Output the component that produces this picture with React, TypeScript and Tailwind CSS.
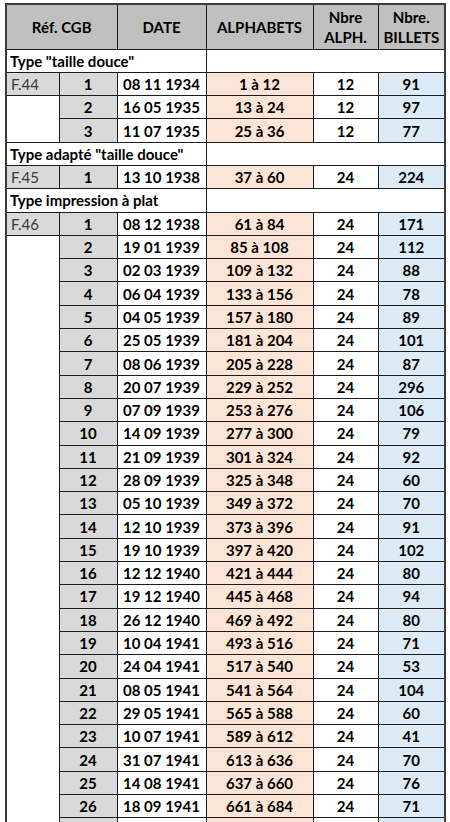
type Row = { n: number | null; date: string; alpha: string; count: number | null; billets: number | null };

type Group = { title: string; ref: string; rows: Row[] };

const GROUPS: Group[] = [
  {
    title: 'Type "taille douce"',
    ref: "F.44",
    rows: [
      { n: 1, date: "08 11 1934", alpha: "1 à 12", count: 12, billets: 91 },
      { n: 2, date: "16 05 1935", alpha: "13 à 24", count: 12, billets: 97 },
      { n: 3, date: "11 07 1935", alpha: "25 à 36", count: 12, billets: 77 },
    ],
  },
  {
    title: 'Type adapté "taille douce"',
    ref: "F.45",
    rows: [{ n: 1, date: "13 10 1938", alpha: "37 à 60", count: 24, billets: 224 }],
  },
  {
    title: "Type impression à plat",
    ref: "F.46",
    rows: [
      { n: 1, date: "08 12 1938", alpha: "61 à 84", count: 24, billets: 171 },
      { n: 2, date: "19 01 1939", alpha: "85 à 108", count: 24, billets: 112 },
      { n: 3, date: "02 03 1939", alpha: "109 à 132", count: 24, billets: 88 },
      { n: 4, date: "06 04 1939", alpha: "133 à 156", count: 24, billets: 78 },
      { n: 5, date: "04 05 1939", alpha: "157 à 180", count: 24, billets: 89 },
      { n: 6, date: "25 05 1939", alpha: "181 à 204", count: 24, billets: 101 },
      { n: 7, date: "08 06 1939", alpha: "205 à 228", count: 24, billets: 87 },
      { n: 8, date: "20 07 1939", alpha: "229 à 252", count: 24, billets: 296 },
      { n: 9, date: "07 09 1939", alpha: "253 à 276", count: 24, billets: 106 },
      { n: 10, date: "14 09 1939", alpha: "277 à 300", count: 24, billets: 79 },
      { n: 11, date: "21 09 1939", alpha: "301 à 324", count: 24, billets: 92 },
      { n: 12, date: "28 09 1939", alpha: "325 à 348", count: 24, billets: 60 },
      { n: 13, date: "05 10 1939", alpha: "349 à 372", count: 24, billets: 70 },
      { n: 14, date: "12 10 1939", alpha: "373 à 396", count: 24, billets: 91 },
      { n: 15, date: "19 10 1939", alpha: "397 à 420", count: 24, billets: 102 },
      { n: 16, date: "12 12 1940", alpha: "421 à 444", count: 24, billets: 80 },
      { n: 17, date: "19 12 1940", alpha: "445 à 468", count: 24, billets: 94 },
      { n: 18, date: "26 12 1940", alpha: "469 à 492", count: 24, billets: 80 },
      { n: 19, date: "10 04 1941", alpha: "493 à 516", count: 24, billets: 71 },
      { n: 20, date: "24 04 1941", alpha: "517 à 540", count: 24, billets: 53 },
      { n: 21, date: "08 05 1941", alpha: "541 à 564", count: 24, billets: 104 },
      { n: 22, date: "29 05 1941", alpha: "565 à 588", count: 24, billets: 60 },
      { n: 23, date: "10 07 1941", alpha: "589 à 612", count: 24, billets: 41 },
      { n: 24, date: "31 07 1941", alpha: "613 à 636", count: 24, billets: 70 },
      { n: 25, date: "14 08 1941", alpha: "637 à 660", count: 24, billets: 76 },
      { n: 26, date: "18 09 1941", alpha: "661 à 684", count: 24, billets: 71 },
      // next row only peeks in at the bottom edge
      { n: null, date: "", alpha: "", count: null, billets: null },
    ],
  },
];

const cell = "border border-[#1c1c1c] h-[23.3px] p-0 text-center font-bold";

function GroupRows({ group }: { group: Group }) {
  return (
    <>
      <tr>
        <td colSpan={3} className="border border-[#1c1c1c] h-[23.3px] p-0 pl-[3px] text-left font-bold whitespace-nowrap">
          {group.title}
        </td>
        <td colSpan={3} className="border-y border-r border-[#1c1c1c] p-0" />
      </tr>
      {group.rows.map((r, i) => (
        <tr key={i}>
          {i === 0 && (
            <td className="border border-[#1c1c1c] bg-[#d9d9d9] p-0 pl-[4px] text-left font-normal text-[#3a3a3a]">
              {group.ref}
            </td>
          )}
          {i === 1 && (
            <td rowSpan={group.rows.length - 1} className="border border-[#1c1c1c] bg-white p-0" />
          )}
          <td className={`${cell} bg-[#d9d9d9]`}>{r.n}</td>
          <td className={`${cell} bg-white`}>{r.date}</td>
          <td className={`${cell} bg-[#fce4d6]`}>{r.alpha}</td>
          <td className={`${cell} bg-white`}>{r.count}</td>
          <td className={`${cell} bg-[#ddebf7]`}>{r.billets}</td>
        </tr>
      ))}
    </>
  );
}

export default function App() {
  return (
    <div className="w-[450px] h-[822px] overflow-hidden bg-white pl-[5px] pt-[3px] text-[15px] leading-[18px] text-black font-['Lato','Liberation_Sans',sans-serif]">
      <table className="table-fixed w-[439px] border-2 border-[#3c3c3c]">
        <colgroup>
          <col className="w-[53px]" />
          <col className="w-[58px]" />
          <col className="w-[89px]" />
          <col className="w-[107px]" />
          <col className="w-[65px]" />
          <col className="w-[67px]" />
        </colgroup>
        <thead>
          <tr className="bg-[#c0c0c0]">
            <th colSpan={2} className="border border-[#1c1c1c] h-[45px] p-0 font-bold">Réf. CGB</th>
            <th className="border border-[#1c1c1c] p-0 font-bold">DATE</th>
            <th className="border border-[#1c1c1c] p-0 font-bold">ALPHABETS</th>
            <th className="border border-[#1c1c1c] p-0 font-bold leading-[20px]">
              Nbre
              <br />
              ALPH.
            </th>
            <th className="border border-[#1c1c1c] p-0 font-bold leading-[20px]">
              Nbre.
              <br />
              BILLETS
            </th>
          </tr>
        </thead>
        <tbody>
          {GROUPS.map((g) => (
            <GroupRows key={g.ref} group={g} />
          ))}
        </tbody>
      </table>
    </div>
  );
}
